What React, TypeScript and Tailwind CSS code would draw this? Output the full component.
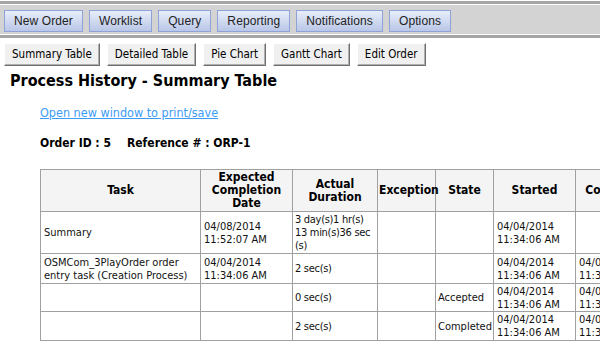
import React from 'react';

const NAV = ['New Order', 'Worklist', 'Query', 'Reporting', 'Notifications', 'Options'];
const TABS = ['Summary Table', 'Detailed Table', 'Pie Chart', 'Gantt Chart', 'Edit Order'];

const tahoma = { fontFamily: '"DejaVu Sans Condensed", "DejaVu Sans", sans-serif' };

type Row = {
  task: string;
  expected: string[];
  actual: string[];
  exception: string;
  state: string;
  started: string[];
  completed: string[];
  h: string;
};

const ROWS: Row[] = [
  {
    task: 'Summary',
    expected: ['04/08/2014', '11:52:07 AM'],
    actual: ['3 day(s)1 hr(s)', '13 min(s)36 sec', '(s)'],
    exception: '',
    state: '',
    started: ['04/04/2014', '11:34:06 AM'],
    completed: [],
    h: 'h-[42px]',
  },
  {
    task: 'OSMCom_3PlayOrder order entry task (Creation Process)',
    expected: ['04/04/2014', '11:34:06 AM'],
    actual: ['2 sec(s)'],
    exception: '',
    state: '',
    started: ['04/04/2014', '11:34:06 AM'],
    completed: ['04/04/2014', '11:34:06 AM'],
    h: 'h-[30px]',
  },
  {
    task: '',
    expected: [],
    actual: ['0 sec(s)'],
    exception: '',
    state: 'Accepted',
    started: ['04/04/2014', '11:34:06 AM'],
    completed: ['04/04/2014', '11:34:06 AM'],
    h: 'h-[28px]',
  },
  {
    task: '',
    expected: [],
    actual: ['2 sec(s)'],
    exception: '',
    state: 'Completed',
    started: ['04/04/2014', '11:34:06 AM'],
    completed: ['04/04/2014', '11:34:06 AM'],
    h: 'h-[29px]',
  },
];

const Lines = ({ lines }: { lines: string[] }) => (
  <>
    {lines.map((l, i) => (
      <div key={i}>{l}</div>
    ))}
  </>
);

export default function App() {
  return (
    <div className="w-[600px] h-[354px] overflow-hidden bg-white">
      {/* top nav */}
      <div className="border-t-[3px] border-[#a5a5a5] mt-[1px]">
        <div className="border-t border-white bg-[#d3d3d3] h-[30px] flex items-start gap-[6px] px-[4px] pt-[5px]">
          {NAV.map((n) => (
            <button
              key={n}
              className="h-[22px] px-[9px] border border-[#8ea2d8] bg-gradient-to-b from-[#e8eefa] to-[#b9c6e6] text-[12px] tracking-[0.1px] text-[#222]"
              style={{ fontFamily: '"Liberation Sans", Arial, sans-serif' }}
            >
              {n}
            </button>
          ))}
        </div>
        <div className="h-[1px] bg-white" />
        <div className="h-[3px] bg-[#a5a5a5]" />
      </div>

      {/* tabs */}
      <div className="flex gap-[7px] px-[4px] pt-[5px]" style={tahoma}>
        {TABS.map((t) => (
          <button
            key={t}
            className="h-[23px] px-[7px] bg-[#f0f0f0] border border-t-white border-l-white border-r-[#6f6f6f] border-b-[#6f6f6f] text-[11.5px] text-black shadow-[inset_-1px_-1px_0_#b0b0b0]"
          >
            {t}
          </button>
        ))}
      </div>

      <div style={tahoma}>
        <h1 className="pl-[10px] pt-[5px] text-[16px] font-bold text-black leading-[19px]">
          Process History - Summary Table
        </h1>
        <div className="pl-[40px] pt-[16px] text-[12.5px] leading-[14px]">
          <a href="#" className="text-[#3c9cf5] underline">
            Open new window to print/save
          </a>
        </div>
        <div className="pl-[40px] pt-[16px] text-[12px] font-bold leading-[14px] text-black flex gap-[16px]">
          <span>Order ID : 5</span>
          <span>Reference # : ORP-1</span>
        </div>

        <div className="pl-[40px] pt-[19px]">
          <table className="border-collapse text-[11px] leading-[13px] text-[#111] table-fixed w-[620px]">
            <colgroup>
              <col className="w-[160px]" />
              <col className="w-[92px]" />
              <col className="w-[85px]" />
              <col className="w-[58px]" />
              <col className="w-[58px]" />
              <col className="w-[82px]" />
              <col className="w-[85px]" />
            </colgroup>
            <thead>
              <tr className="h-[42px] bg-[#f4f4f4]">
                {['Task', 'Expected Completion Date', 'Actual Duration', 'Exception', 'State', 'Started', 'Completed'].map((h) => (
                  <th
                    key={h}
                    className="border border-[#a0a0a0] px-[1px] text-[12px] leading-[13px] font-bold text-center align-middle text-black"
                  >
                    {h}
                  </th>
                ))}
              </tr>
            </thead>
            <tbody>
              {ROWS.map((r, i) => (
                <tr key={i} className={r.h}>
                  <td className="border border-[#a0a0a0] px-[3px] align-middle">{r.task}</td>
                  <td className="border border-[#a0a0a0] px-[3px] align-middle">
                    <Lines lines={r.expected} />
                  </td>
                  <td className="border border-[#a0a0a0] px-[2px] align-middle whitespace-nowrap tracking-[-0.3px]">
                    <Lines lines={r.actual} />
                  </td>
                  <td className="border border-[#a0a0a0] px-[3px] align-middle">{r.exception}</td>
                  <td className="border border-[#a0a0a0] px-[2px] align-middle whitespace-nowrap">{r.state}</td>
                  <td className="border border-[#a0a0a0] px-[3px] align-middle">
                    <Lines lines={r.started} />
                  </td>
                  <td className="border border-[#a0a0a0] px-[3px] align-middle whitespace-nowrap">
                    <Lines lines={r.completed} />
                  </td>
                </tr>
              ))}
            </tbody>
          </table>
        </div>
      </div>
    </div>
  );
}
